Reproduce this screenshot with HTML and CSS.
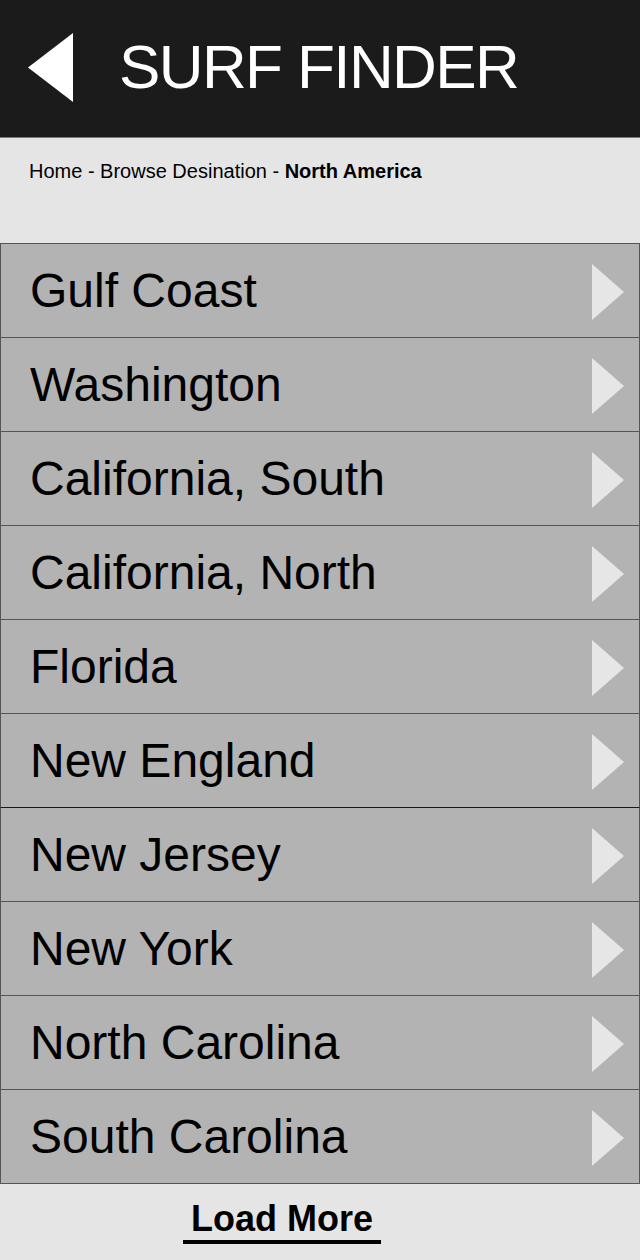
FILE: index.html
```html
<!DOCTYPE html>
<html>
<head>
<meta charset="utf-8">
<link rel="stylesheet" href="styles.css">
</head>
<body>
<div class="app">
  <header class="topbar">
    <svg class="back" width="46" height="70" viewBox="0 0 46 70"><polygon points="45,0 45,69 0,34.5" fill="#fff"/></svg>
    <h1 class="title">SURF FINDER</h1>
  </header>
  <nav class="crumbs">Home - Browse Desination - <b>North America</b></nav>
  <ul class="list">
    <li class="row"><span>Gulf Coast</span><i class="chev"></i></li>
    <li class="row"><span>Washington</span><i class="chev"></i></li>
    <li class="row"><span>California, South</span><i class="chev"></i></li>
    <li class="row"><span>California, North</span><i class="chev"></i></li>
    <li class="row"><span>Florida</span><i class="chev"></i></li>
    <li class="row dark"><span>New England</span><i class="chev"></i></li>
    <li class="row"><span>New Jersey</span><i class="chev"></i></li>
    <li class="row"><span>New York</span><i class="chev"></i></li>
    <li class="row"><span>North Carolina</span><i class="chev"></i></li>
    <li class="row"><span>South Carolina</span><i class="chev"></i></li>
  </ul>
  <div class="more"><a class="more-link">Load More</a></div>
</div>
</body>
</html>
```
FILE: styles.css
```css
html, body {
  margin: 0;
  padding: 0;
  background: #e5e5e5;
  font-family: "Liberation Sans", Arial, sans-serif;
}
.app {
  width: 640px;
  min-height: 1260px;
  background: #e5e5e5;
}
.topbar {
  height: 137px;
  background: #1b1b1b;
  border-bottom: 1px solid #7a7a7a;
  display: flex;
  align-items: center;
  padding-left: 28px;
  box-sizing: content-box;
}
.back {
  display: block;
  margin-top: -1px;
}
.title {
  margin: 0 0 0 45px;
  color: #fff;
  font-weight: normal;
  font-size: 62px;
  letter-spacing: -1.6px;
  line-height: 1;
  margin-top: -4px;
}
.crumbs {
  height: 105px;
  box-sizing: border-box;
  padding: 22px 0 0 29px;
  font-size: 20px;
  color: #000;
}
.crumbs b {
  font-weight: bold;
}
.list {
  list-style: none;
  margin: 0;
  padding: 0;
  border-top: 1px solid #555;
}
.row {
  height: 93px;
  background: #b3b3b3;
  border-left: 1px solid #555;
  border-right: 1px solid #555;
  border-bottom: 1px solid #555;
  display: flex;
  align-items: center;
  justify-content: space-between;
  padding: 0 15px 0 29px;
  font-size: 48px;
  color: #000;
}
.row.dark {
  border-bottom-color: #1a1a1a;
}
.chev {
  width: 0;
  height: 0;
  border-top: 28.5px solid transparent;
  border-bottom: 28.5px solid transparent;
  border-left: 32px solid #e6e6e6;
  margin-top: 2px;
}
.more {
  height: 76px;
  display: flex;
  align-items: flex-start;
  padding-left: 183px;
}
.more-link {
  margin-top: 15px;
  padding: 0 8px 1px;
  font-size: 36px;
  font-weight: bold;
  color: #000;
  border-bottom: 4px solid #000;
  line-height: 40px;
}
```
